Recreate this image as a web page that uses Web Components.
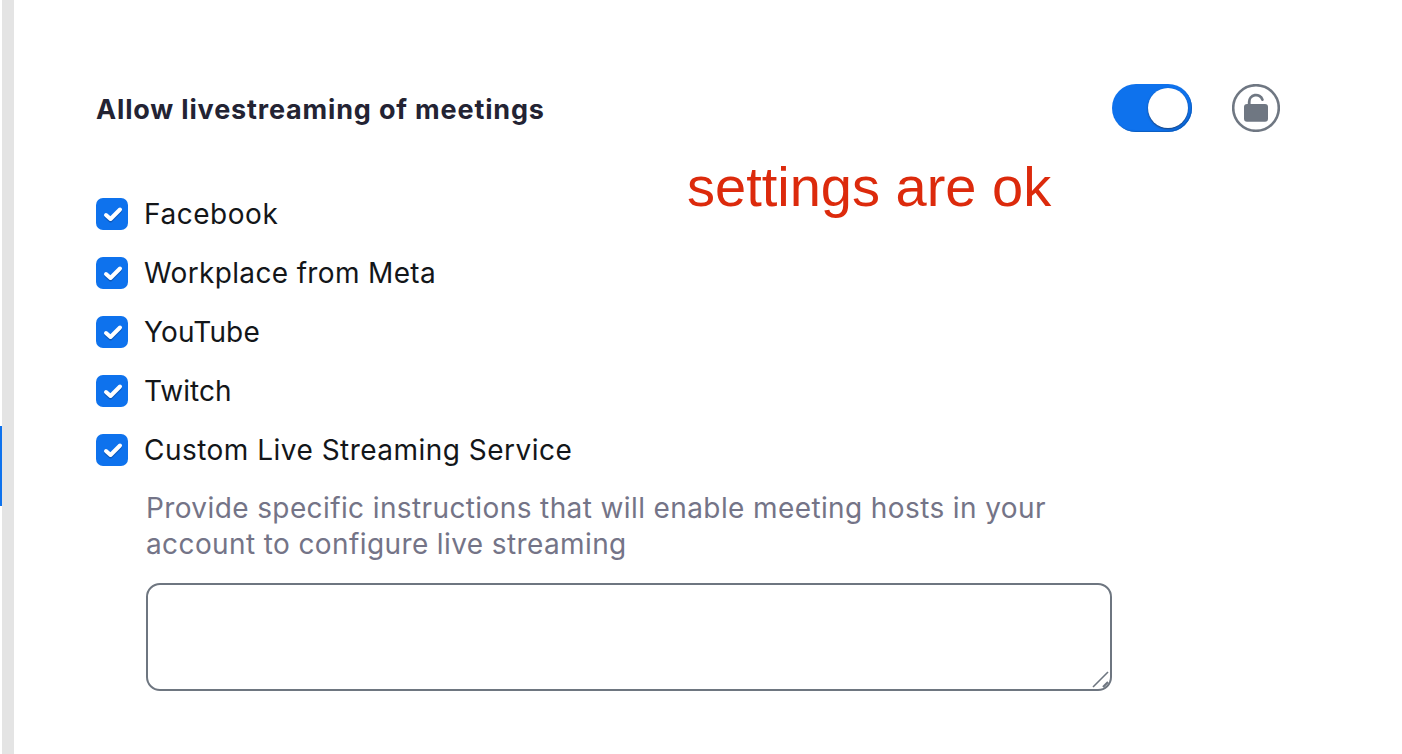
<!DOCTYPE html>
<html>
<head>
<meta charset="utf-8">
<style>
  html, body { margin: 0; padding: 0; background: #fff; }
  body { font-family: Inter, "Liberation Sans", sans-serif; }
</style>
</head>
<body>
<settings-page>
  <setting-header title="Allow livestreaming of meetings"></setting-header>
  <check-row style="letter-spacing:.55px">Facebook</check-row>
  <check-row style="letter-spacing:.35px">Workplace from Meta</check-row>
  <check-row style="letter-spacing:.15px">YouTube</check-row>
  <check-row style="letter-spacing:0">Twitch</check-row>
  <check-row style="letter-spacing:.48px">Custom Live Streaming Service</check-row>
  <custom-service>Provide specific instructions that will enable meeting hosts in your account to configure live streaming</custom-service>
</settings-page>
<script>
class SettingsPage extends HTMLElement {
    constructor() {
        super();
        this.attachShadow({mode: 'open'}).innerHTML = `
            <style>
                :host { display: flex; height: 754px; overflow: hidden; position: relative; background: #fff; }
                .rail { width: 12px; margin-left: 2px; background: #e4e4e4; position: relative; flex: none; }
                .rail i { position: absolute; left: -2px; top: 426px; width: 2px; height: 80px; background: #0e72ed; }
                .content { flex: 1; padding: 84px 122px 0 82px; }
                .note {
                    position: absolute; left: 687px; top: 155px;
                    font: 56px/64px "Liberation Sans", Arial, sans-serif;
                    color: #dc2a0c;
                }
            </style>
            <div class="rail"><i></i></div>
            <div class="content"><slot></slot></div>
            <div class="note">settings are ok</div>
        `;
    }
}

class SettingHeader extends HTMLElement {
    constructor() {
        super();
        this.attachShadow({mode: 'open'}).innerHTML = `
            <style>
                :host { display: flex; align-items: center; height: 48px; margin-bottom: 66px; }
                h2 { flex: 1; margin: 0; font-size: 27px; font-weight: 700; letter-spacing: .83px; color: #232333; line-height: 50px; padding-top: 3px; }
                .toggle {
                    width: 80px; height: 48px; border-radius: 24px; background: #0e72ed;
                    display: flex; justify-content: flex-end; align-items: center; padding: 4px; box-sizing: border-box;
                    box-shadow: inset -1px -1px 1px #0b5cbe;
                }
                .toggle b { width: 40px; height: 40px; border-radius: 50%; background: #fff; box-shadow: 0 1px 2px #1c3f73; }
                svg { margin-left: 40px; display: block; }
            </style>
            <h2></h2>
            <div class="toggle"><b></b></div>
            <svg width="48" height="48" viewBox="0 0 48 48">
                <circle cx="24" cy="24" r="22.800" fill="none" stroke="#6f7782" stroke-width="2.600"/>
                <path d="M17.200 21v-3a6.800 6.800 0 0 1 13.200-2.400" fill="none" stroke="#6f7782" stroke-width="2.800" stroke-linecap="round"/>
                <rect x="12" y="20" width="24" height="17.700" rx="3" fill="#6f7782"/>
            </svg>
        `;
        this.shadowRoot.querySelector('h2').textContent = this.getAttribute('title');
    }
}

class CheckRow extends HTMLElement {
    constructor() {
        super();
        this.attachShadow({mode: 'open'}).innerHTML = `
            <style>
                :host { display: flex; align-items: center; height: 32px; margin-bottom: 27px; font-size: 28px; color: #131619; }
                .box { width: 32px; height: 32px; border-radius: 7px; background: #0e72ed; flex: none; margin-right: 16px; }
                svg { display: block; }
                span { line-height: 32px; }
            </style>
            <div class="box">
                <svg width="32" height="32" viewBox="0 0 32 32">
                    <path d="M10 17l4.500 4 9.500-9.500" fill="none" stroke="#0a3f8c" stroke-width="4" stroke-linecap="round" stroke-linejoin="round" opacity=".5" transform="translate(0 1.500)"/>
                    <path d="M10 17l4.500 4 9.500-9.500" fill="none" stroke="#fff" stroke-width="4" stroke-linecap="round" stroke-linejoin="round"/>
                </svg>
            </div>
            <span><slot></slot></span>
        `;
    }
}

class CustomService extends HTMLElement {
    constructor() {
        super();
        this.attachShadow({mode: 'open'}).innerHTML = `
            <style>
                :host { display: block; margin: -3px 0 0 50px; width: 966px; }
                p { margin: 0 0 21px; font-size: 28px; letter-spacing: .39px; line-height: 36px; color: #747487; width: 920px; }
                .wrap { position: relative; height: 108px; }
                textarea {
                    display: block; width: 100%; height: 100%; box-sizing: border-box; resize: none; outline: none;
                    border: 2px solid #6e7680; border-radius: 14px; background: #fff; padding: 8px;
                }
                svg { position: absolute; right: 2px; bottom: 2px; display: block; }
            </style>
            <p><slot></slot></p>
            <div class="wrap">
                <textarea></textarea>
                <svg width="18" height="18" viewBox="0 0 18 18">
                    <path d="M1 16L16 1" fill="none" stroke="#6e7680" stroke-width="1.600"/>
                    <path d="M11 16l5-5" fill="none" stroke="#6e7680" stroke-width="2.200"/>
                </svg>
            </div>
        `;
    }
}

customElements.define('settings-page', SettingsPage);
customElements.define('setting-header', SettingHeader);
customElements.define('check-row', CheckRow);
customElements.define('custom-service', CustomService);
</script>
</body>
</html>
